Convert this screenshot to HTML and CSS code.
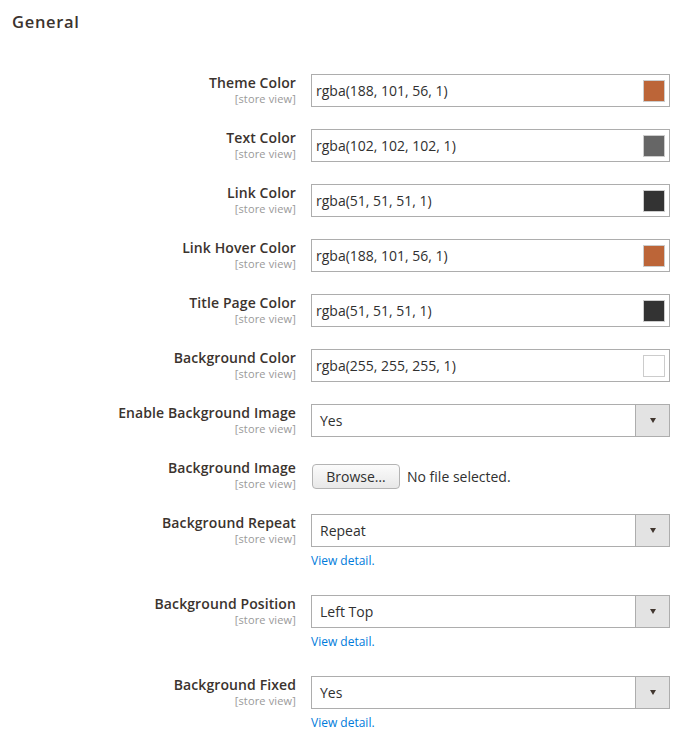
FILE: index.html
```html
<!DOCTYPE html>
<html>
<head>
<meta charset="utf-8">
<link rel="stylesheet" href="styles.css">
</head>
<body>
<div class="page">
  <h2 class="section-title">General</h2>
  <div class="fields">
    <div class="row">
      <div class="label"><div class="label-text">Theme Color</div><div class="scope">[store view]</div></div>
      <div class="control"><div class="color-input"><span>rgba(188, 101, 56, 1)</span><span class="swatch" style="background: rgb(188,101,56)"></span></div></div>
    </div>
    <div class="row">
      <div class="label"><div class="label-text">Text Color</div><div class="scope">[store view]</div></div>
      <div class="control"><div class="color-input"><span>rgba(102, 102, 102, 1)</span><span class="swatch" style="background: rgb(102,102,102)"></span></div></div>
    </div>
    <div class="row">
      <div class="label"><div class="label-text">Link Color</div><div class="scope">[store view]</div></div>
      <div class="control"><div class="color-input"><span>rgba(51, 51, 51, 1)</span><span class="swatch" style="background: rgb(51,51,51)"></span></div></div>
    </div>
    <div class="row">
      <div class="label"><div class="label-text">Link Hover Color</div><div class="scope">[store view]</div></div>
      <div class="control"><div class="color-input"><span>rgba(188, 101, 56, 1)</span><span class="swatch" style="background: rgb(188,101,56)"></span></div></div>
    </div>
    <div class="row">
      <div class="label"><div class="label-text">Title Page Color</div><div class="scope">[store view]</div></div>
      <div class="control"><div class="color-input"><span>rgba(51, 51, 51, 1)</span><span class="swatch" style="background: rgb(51,51,51)"></span></div></div>
    </div>
    <div class="row">
      <div class="label"><div class="label-text">Background Color</div><div class="scope">[store view]</div></div>
      <div class="control"><div class="color-input"><span>rgba(255, 255, 255, 1)</span><span class="swatch" style="background: rgb(255,255,255)"></span></div></div>
    </div>
    <div class="row">
      <div class="label"><div class="label-text">Enable Background Image</div><div class="scope">[store view]</div></div>
      <div class="control"><div class="select"><span class="select-value">Yes</span><span class="select-btn"><span class="arrow"></span></span></div></div>
    </div>
    <div class="row">
      <div class="label"><div class="label-text">Background Image</div><div class="scope">[store view]</div></div>
      <div class="control"><div class="file"><span class="browse">Browse…</span><span class="file-name">No file selected.</span></div></div>
    </div>
    <div class="row">
      <div class="label"><div class="label-text">Background Repeat</div><div class="scope">[store view]</div></div>
      <div class="control"><div class="select"><span class="select-value">Repeat</span><span class="select-btn"><span class="arrow"></span></span></div><a class="note" href="#">View detail.</a></div>
    </div>
    <div class="row">
      <div class="label"><div class="label-text">Background Position</div><div class="scope">[store view]</div></div>
      <div class="control"><div class="select"><span class="select-value">Left Top</span><span class="select-btn"><span class="arrow"></span></span></div><a class="note" href="#">View detail.</a></div>
    </div>
    <div class="row">
      <div class="label"><div class="label-text">Background Fixed</div><div class="scope">[store view]</div></div>
      <div class="control"><div class="select"><span class="select-value">Yes</span><span class="select-btn"><span class="arrow"></span></span></div><a class="note" href="#">View detail.</a></div>
    </div>
  </div>
</div>
</body>
</html>
```
FILE: styles.css
```css
* { box-sizing: border-box; }
html, body { margin: 0; padding: 0; background: #fff; }
body {
  font-family: "Open Sans", "Liberation Sans", sans-serif;
  color: #303030;
  font-size: 14px;
}
.page { padding: 12px 0 0 0; }
.section-title {
  margin: 0 0 0 12px;
  font-size: 16.5px;
  line-height: 20px;
  font-weight: 600;
  letter-spacing: 0.7px;
  color: #3b332e;
}
.fields {
  margin-top: 42px;
  display: flex;
  flex-direction: column;
  gap: 22px;
}
.row {
  display: grid;
  grid-template-columns: 296px 359px;
  column-gap: 15px;
}
.label { text-align: right; height: 31px; }
.label-text {
  font-size: 14px;
  line-height: 18px;
  font-weight: 600;
  letter-spacing: 0.1px;
  color: #3b332e;
}
.scope {
  font-size: 11px;
  line-height: 12px;
  margin-top: 1px;
  letter-spacing: 0.15px;
  color: #999;
}
.control {
  display: flex;
  flex-direction: column;
  align-items: flex-start;
  min-height: 33px;
}
.color-input {
  width: 359px;
  height: 33px;
  border: 1px solid #adadad;
  display: flex;
  align-items: center;
  justify-content: space-between;
  padding: 0 4px 0 4px;
  font-size: 14px;
  color: #303030;
}
.swatch {
  width: 22px;
  height: 22px;
  border: 1px solid #ccc;
}
.select {
  width: 359px;
  height: 33px;
  border: 1px solid #adadad;
  display: flex;
  align-items: stretch;
}
.select-value {
  flex: 1;
  display: flex;
  align-items: center;
  padding-left: 8px;
  font-size: 14px;
  color: #303030;
}
.select-btn {
  width: 34px;
  background: #e3e3e3;
  border-left: 1px solid #adadad;
  display: flex;
  align-items: center;
  justify-content: center;
}
.arrow {
  width: 0;
  height: 0;
  border-left: 3.5px solid transparent;
  border-right: 3.5px solid transparent;
  border-top: 5px solid #41362f;
  margin-left: 1px;
}
.file {
  display: flex;
  align-items: center;
  gap: 7px;
  margin-top: 5px;
  margin-left: 1px;
  height: 25px;
}
.browse {
  width: 88px;
  height: 25px;
  border: 1px solid #b4b4b4;
  border-radius: 4px;
  background: linear-gradient(#fbfbfb, #e8e8e8);
  display: flex;
  align-items: center;
  justify-content: center;
  font-size: 14px;
  color: #303030;
}
.file-name { font-size: 14px; line-height: 19px; color: #303030; }
.note {
  margin-top: 4px;
  margin-bottom: 2px;
  font-size: 12px;
  line-height: 20px;
  color: #007bdb;
  text-decoration: none;
}
```
